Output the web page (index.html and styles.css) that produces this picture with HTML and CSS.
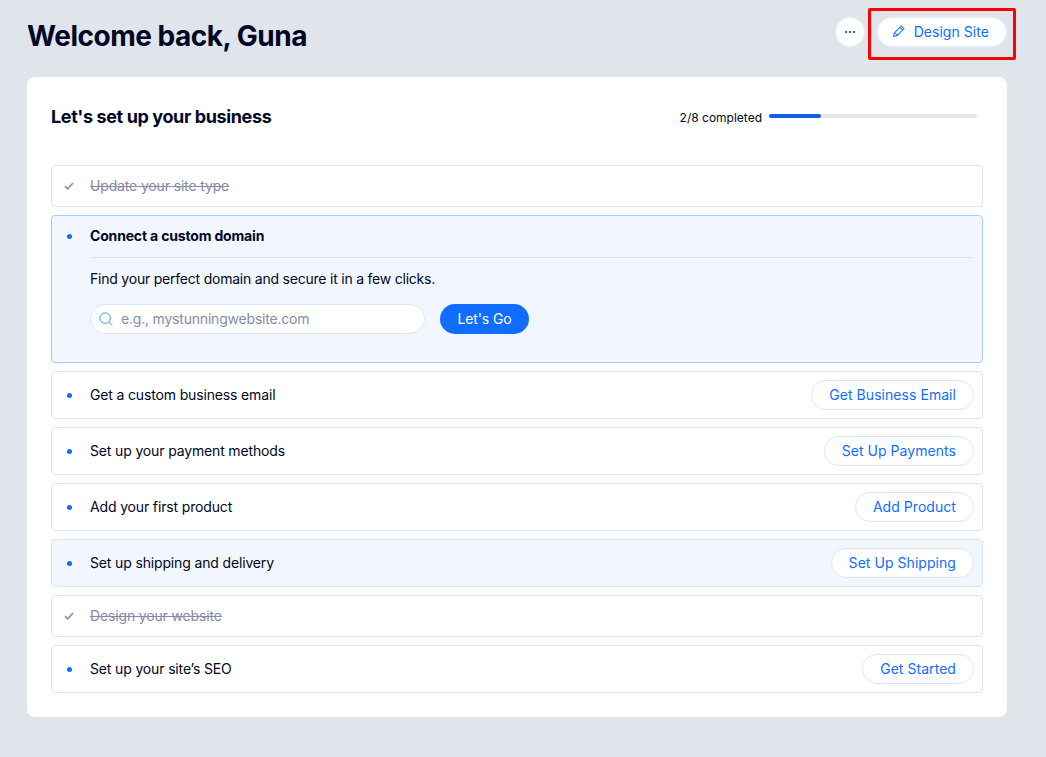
FILE: index.html
```html
<!DOCTYPE html>
<html lang="en">
<head>
    <meta charset="UTF-8">
    <meta name="viewport" content="width=device-width, initial-scale=1.0">
    <title>Dashboard</title>
    <link rel="stylesheet" href="styles.css">
</head>
<body>
    <header class="page-header">
        <h1 class="welcome">Welcome back, Guna</h1>
        <div class="header-actions">
            <button class="more-button" aria-label="More actions">
                <svg width="12" height="4" viewBox="0 0 12 4"><circle cx="2" cy="2" r="1.2"/><circle cx="6" cy="2" r="1.2"/><circle cx="10" cy="2" r="1.2"/></svg>
            </button>
            <button class="pill-button design-button">
                <svg class="pencil" width="12" height="12" viewBox="0 0 14 14"><path d="M9.6 1.2l3.2 3.2-8 8-4.2 1 1-4.2zM8 2.8l3.2 3.2M2 8.8l3.2 3.2"/></svg>
                Design Site
            </button>
            <div class="highlight-box"></div>
        </div>
    </header>

    <main class="setup-card">
        <div class="setup-head">
            <h2 class="setup-title">Let's set up your business</h2>
            <div class="progress">
                <span class="progress-label">2/8 completed</span>
                <div class="progress-track"><div class="progress-fill" style="width: 25%"></div></div>
            </div>
        </div>

        <ul class="task-list">
            <li class="task task-done">
                <svg class="task-check" width="10" height="8" viewBox="0 0 10 8"><path d="M1 4.2l2.7 2.6L9 1"/></svg>
                <span class="task-name">Update your site type</span>
            </li>

            <li class="task task-open">
                <div class="task-open-head">
                    <span class="task-dot"></span>
                    <span class="task-name">Connect a custom domain</span>
                </div>
                <div class="task-open-body">
                    <p class="task-desc">Find your perfect domain and secure it in a few clicks.</p>
                    <div class="domain-form">
                        <label class="domain-search">
                            <svg class="search-icon" width="14" height="14" viewBox="0 0 16 16"><circle cx="7" cy="7" r="6"/><path d="M11.3 11.3l3.7 4"/></svg>
                            <input class="domain-input" type="text" placeholder="e.g., mystunningwebsite.com">
                        </label>
                        <button class="go-button">Let's Go</button>
                    </div>
                </div>
            </li>

            <li class="task">
                <span class="task-dot"></span>
                <span class="task-name">Get a custom business email</span>
                <button class="pill-button">Get Business Email</button>
            </li>
            <li class="task">
                <span class="task-dot"></span>
                <span class="task-name">Set up your payment methods</span>
                <button class="pill-button">Set Up Payments</button>
            </li>
            <li class="task">
                <span class="task-dot"></span>
                <span class="task-name">Add your first product</span>
                <button class="pill-button">Add Product</button>
            </li>
            <li class="task task-hover">
                <span class="task-dot"></span>
                <span class="task-name">Set up shipping and delivery</span>
                <button class="pill-button">Set Up Shipping</button>
            </li>
            <li class="task task-done">
                <svg class="task-check" width="10" height="8" viewBox="0 0 10 8"><path d="M1 4.2l2.7 2.6L9 1"/></svg>
                <span class="task-name">Design your website</span>
            </li>
            <li class="task">
                <span class="task-dot"></span>
                <span class="task-name">Set up your site’s SEO</span>
                <button class="pill-button">Get Started</button>
            </li>
        </ul>
    </main>
</body>
</html>
```

FILE: styles.css
```css
* {
    box-sizing: border-box;
}

body {
    font-family: Inter, 'Noto Sans', sans-serif;
    margin: 0;
    padding: 0 39px 40px 27px;
    overflow: hidden;
    background-color: #dfe5eb;
    color: #000624;
}

.page-header {
    height: 77px;
    display: flex;
    justify-content: space-between;
    align-items: center;
    padding-bottom: 5px;
}

.welcome {
    margin: 0;
    font-size: 28px;
    font-weight: 700;
    letter-spacing: -0.48px;
}

.header-actions {
    position: relative;
    align-self: flex-start;
    margin-top: 17px;
    display: flex;
    align-items: center;
    gap: 12px;
}

.more-button {
    width: 30px;
    height: 30px;
    padding: 0;
    border: 1px solid #e7f0ff;
    border-radius: 50%;
    background-color: #fff;
    display: flex;
    align-items: center;
    justify-content: center;
}

.more-button svg {
    fill: #116dff;
}

.pill-button {
    height: 30px;
    padding: 0 17px 2px;
    border: 1px solid #d6e6fe;
    border-radius: 15px;
    background-color: #fff;
    color: #116dff;
    font-family: inherit;
    font-size: 14px;
    letter-spacing: 0.05px;
    white-space: nowrap;
}

.design-button {
    display: flex;
    align-items: center;
    gap: 9px;
    padding-left: 15px;
    border-color: #e7f0ff;
}

.pencil {
    fill: none;
    stroke: #2f7ef5;
    stroke-width: 1.3;
}

.highlight-box {
    position: absolute;
    top: -9px;
    right: -9px;
    width: 148px;
    height: 52px;
    border: 3px solid #fe0000;
    border-radius: 2px;
    pointer-events: none;
}

.setup-card {
    height: 640px;
    padding: 0 24px;
    background-color: #fff;
    border-radius: 8px;
}

.setup-head {
    height: 88px;
    display: flex;
    justify-content: space-between;
    align-items: flex-start;
    padding-top: 28px;
}

.setup-title {
    margin: 0;
    font-size: 18px;
    line-height: 24px;
    font-weight: 700;
    letter-spacing: -0.38px;
}

.progress {
    display: flex;
    align-items: center;
    gap: 7px;
    margin-top: 4px;
    padding-right: 6px;
}

.progress-label {
    padding-top: 1px;
    font-size: 12px;
    line-height: 16px;
}

.progress-track {
    width: 208px;
    height: 4px;
    margin-top: -3px;
    border-radius: 2px;
    background-color: #e6e6e6;
}

.progress-fill {
    height: 100%;
    border-radius: 2px;
    background-color: #0f62e6;
}

.task-list {
    list-style: none;
    margin: 0;
    padding: 0;
    display: flex;
    flex-direction: column;
    gap: 8px;
}

.task {
    min-height: 48px;
    padding: 0 8px 0 15px;
    display: flex;
    align-items: center;
    border: 1px solid #dfe5eb;
    border-radius: 4px;
    font-size: 14px;
    letter-spacing: -0.15px;
}

.task-name {
    padding-bottom: 2px;
}

.task .pill-button {
    margin-left: auto;
}

.task-dot {
    flex: none;
    width: 5px;
    height: 5px;
    margin-right: 18px;
    border-radius: 50%;
    background-color: #116dff;
}

.task-check {
    flex: none;
    margin-right: 16px;
    margin-left: -3px;
    fill: none;
    stroke: #7a92a5;
    stroke-width: 1.6;
}

.task-done {
    min-height: 42px;
}

.task-done .task-name {
    color: #868aa5;
    text-decoration: line-through;
}

.task-hover {
    background-color: #f2f7ff;
    border-color: #d6e6fe;
}

.task-open {
    display: block;
    height: 148px;
    background-color: #f2f7ff;
    border-color: #a8caff;
}

.task-open-head {
    display: flex;
    align-items: center;
    font-weight: 700;
    letter-spacing: -0.17px;
}

.task-open-head .task-name {
    flex: 1;
    height: 42px;
    padding: 11px 0 0;
    border-bottom: 1px solid #dfe5eb;
}

.task-open-head .task-dot {
    margin-bottom: 2px;
}

.task-open-body {
    padding-left: 23px;
}

.task-desc {
    margin: 12px 0 16px;
    line-height: 18px;
    letter-spacing: -0.22px;
}

.domain-form {
    display: flex;
    align-items: center;
    gap: 15px;
}

.domain-search {
    width: 335px;
    height: 30px;
    padding: 0 8px;
    display: flex;
    align-items: center;
    gap: 8px;
    background-color: #fff;
    border: 1px solid #d6e6fe;
    border-radius: 15px;
}

.search-icon {
    flex: none;
    fill: none;
    stroke: #3b99e8;
    stroke-width: 1.1;
}

.domain-input {
    flex: 1;
    min-width: 0;
    padding: 0 0 2px;
    border: none;
    outline: none;
    background: none;
    font-family: inherit;
    font-size: 14px;
    letter-spacing: -0.2px;
}

.domain-input::placeholder {
    color: #868aa5;
    opacity: 1;
}

.go-button {
    width: 89px;
    height: 30px;
    padding: 0 0 2px;
    border: none;
    border-radius: 15px;
    background-color: #116dff;
    color: #fff;
    font-family: inherit;
    font-size: 14px;
    letter-spacing: -0.1px;
}
```
